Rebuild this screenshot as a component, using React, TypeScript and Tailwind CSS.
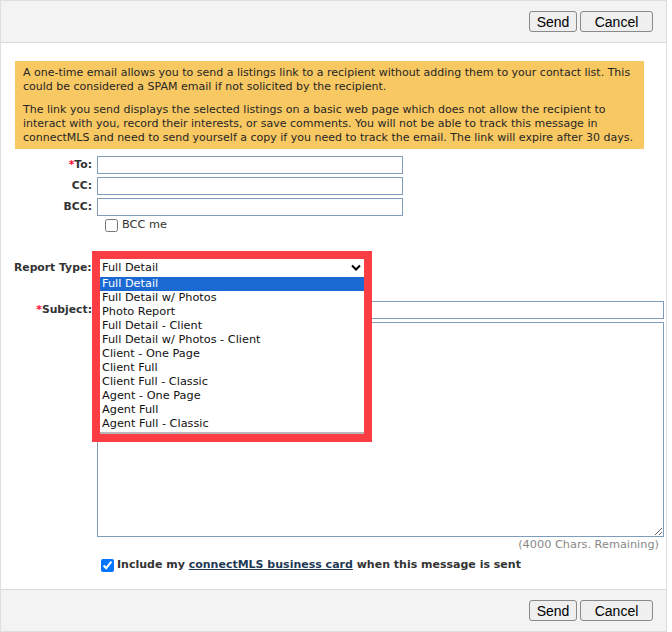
const REPORT_TYPES = [
  'Full Detail',
  'Full Detail w/ Photos',
  'Photo Report',
  'Full Detail - Client',
  'Full Detail w/ Photos - Client',
  'Client - One Page',
  'Client Full',
  'Client Full - Classic',
  'Agent - One Page',
  'Agent Full',
  'Agent Full - Classic',
];

function ActionBar({ top }: { top?: boolean }) {
  return (
    <div
      className={`flex h-[42px] items-center justify-end gap-[3px] bg-[#f3f3f3] pr-[13px] ${
        top ? 'border-b border-[#dadada]' : 'border-t border-[#dadada]'
      }`}
    >
      <button className="h-[21px] w-[48px] rounded-[3px] border border-[#8a8a8a] bg-[#efefef] font-['Liberation_Sans',sans-serif] text-[14px] leading-none text-black">
        Send
      </button>
      <button className="h-[21px] w-[73px] rounded-[3px] border border-[#8a8a8a] bg-[#efefef] font-['Liberation_Sans',sans-serif] text-[14px] leading-none text-black">
        Cancel
      </button>
    </div>
  );
}

function FieldRow({ label, required }: { label: string; required?: boolean }) {
  return (
    <div className="flex items-center">
      <label className="w-[92px] pr-[1px] text-right text-[10.8px] font-bold text-[#333]">
        {required && <span className="text-[#f03]">*</span>}
        {label}
      </label>
      <input
        type="text"
        className="ml-[4px] h-[18px] w-[306px] border border-[#7f9db9] bg-white outline-none"
      />
    </div>
  );
}

function ReportTypeSelect() {
  return (
    <div className="relative h-[17px] w-[264px]">
      <div className="flex h-[17px] items-center justify-between bg-white pl-[2px] pr-[3px] text-[#111]">
        <span>Full Detail</span>
        <svg width="10" height="7" viewBox="0 0 10 7" aria-hidden="true">
          <polyline points="1,1.5 5,5.5 9,1.5" fill="none" stroke="#000" strokeWidth="2" />
        </svg>
      </div>

      {/* open options list */}
      <div className="absolute left-0 top-[17px] z-10 w-[264px] border-b-[3px] border-b-[#b8b8b8] bg-white pb-[1px] pt-[1px]">
        {REPORT_TYPES.map((t, i) => (
          <div
            key={t}
            className={`h-[14px] pl-[2px] leading-[14px] ${
              i === 0 ? 'bg-[#1b69d3] text-white' : 'text-[#111]'
            }`}
          >
            {t}
          </div>
        ))}
      </div>

      {/* red annotation frame */}
      <div className="pointer-events-none absolute left-[-8px] top-[-8px] z-20 h-[191px] w-[280px] border-[8px] border-[#fb3d44]" />
    </div>
  );
}

export default function App() {
  return (
    <div className="h-[632px] w-[672px] bg-white font-['DejaVu_Sans',sans-serif] text-[11.3px] leading-[14px]">
      <div className="flex h-[632px] w-[667px] flex-col border border-[#dedede]">
        <ActionBar top />

        <div className="flex-1">
          {/* notice */}
          <div className="ml-[14px] mt-[18px] w-[629px] whitespace-nowrap bg-[#f8c862] px-[8px] pb-[4px] pt-[5px] text-[11px] text-[#262626]">
            <p>
              A one-time email allows you to send a listings link to a recipient without adding them to your contact list. This
              <br />
              could be considered a SPAM email if not solicited by the recipient.
            </p>
            <p className="mt-[9px]">
              The link you send displays the selected listings on a basic web page which does not allow the recipient to
              <br />
              interact with you, record their interests, or save comments. You will not be able to track this message in
              <br />
              connectMLS and need to send yourself a copy if you need to track the email. The link will expire after 30 days.
            </p>
          </div>

          {/* recipients */}
          <div className="mt-[7px] flex flex-col gap-[3px]">
            <FieldRow label="To:" required />
            <FieldRow label="CC:" />
            <FieldRow label="BCC:" />
          </div>
          <label className="ml-[104px] mt-[2px] flex items-center gap-[4px] text-[#333]">
            <input type="checkbox" className="m-0 h-[13px] w-[13px]" />
            <span>BCC me</span>
          </label>

          {/* report type */}
          <div className="mt-[27px] flex items-center pl-[13px]">
            <label className="w-[86px] text-[10.8px] font-bold text-[#333]">Report Type:</label>
            <ReportTypeSelect />
          </div>

          {/* subject + message */}
          <div className="mt-[25px] flex items-center">
            <label className="w-[92px] pr-[1px] text-right text-[10.8px] font-bold text-[#333]">
              <span className="text-[#f03]">*</span>Subject:
            </label>
            <input
              type="text"
              className="ml-[4px] h-[18px] w-[567px] border border-[#7f9db9] bg-white outline-none"
            />
          </div>
          <textarea className="ml-[96px] mt-[3px] block h-[215px] w-[567px] border border-[#7f9db9] bg-white outline-none" />
          <div className="mt-[1px] w-[658px] text-right text-[#888]">(4000 Chars. Remaining)</div>

          <label className="ml-[100px] mt-[6px] flex items-center gap-[3px] text-[11px] font-bold text-[#333]">
            <input type="checkbox" defaultChecked className="m-0 h-[13px] w-[13px]" />
            <span>
              Include my{' '}
              <a href="#" className="text-[#1f3a56] underline">
                connectMLS business card
              </a>{' '}
              when this message is sent
            </span>
          </label>
        </div>

        <ActionBar />
      </div>
    </div>
  );
}
